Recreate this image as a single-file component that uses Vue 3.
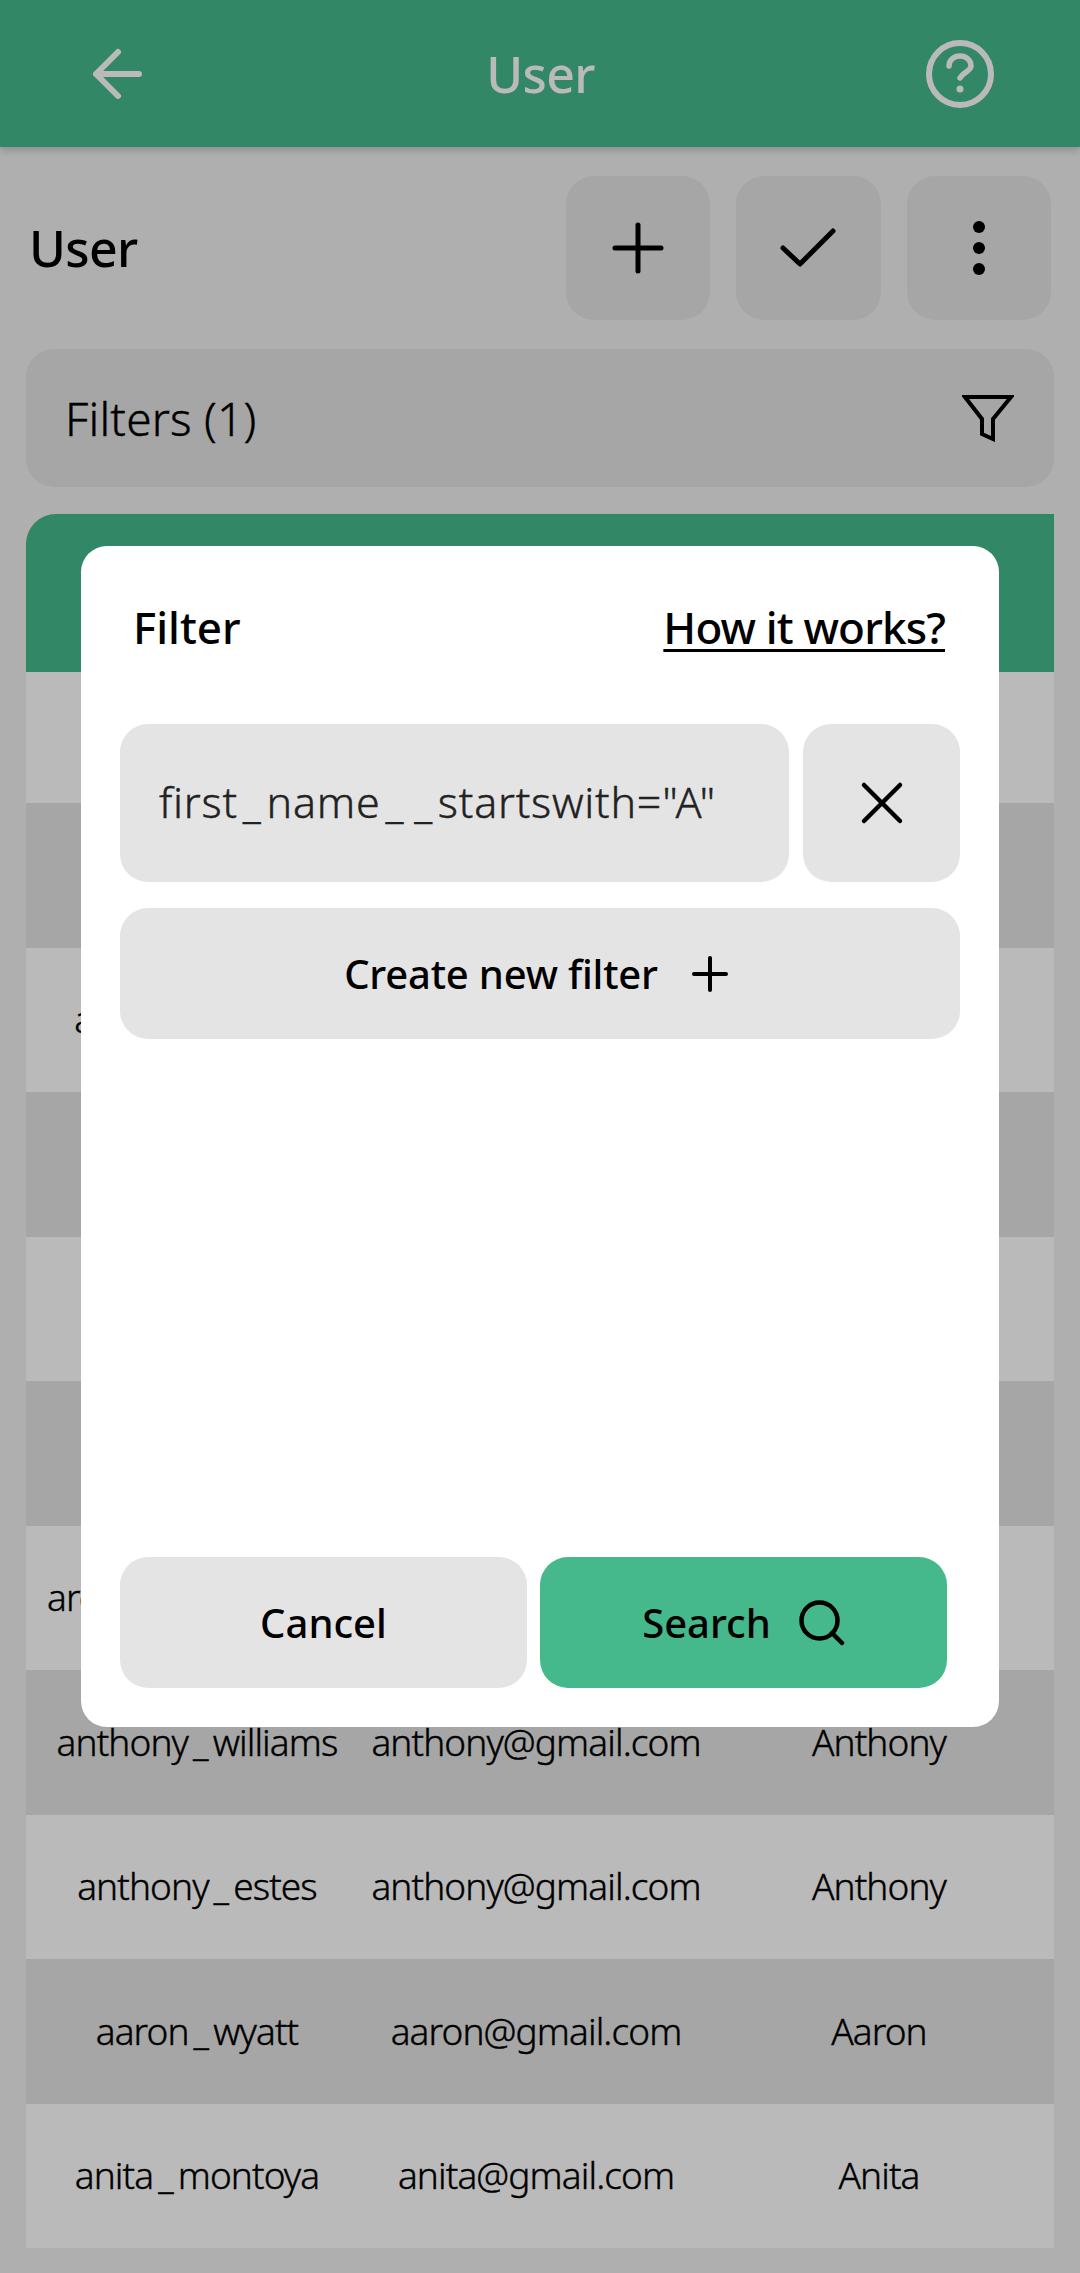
<template>
  <div class="screen">
    <header class="topbar">
      <button class="topbar-icon">
        <svg width="60" height="56" viewBox="0 0 60 56" fill="none" stroke="currentColor" stroke-width="6" stroke-linecap="round" stroke-linejoin="round">
          <path d="M8 28H51M30 6L8 28L30 50" />
        </svg>
      </button>
      <h1 class="topbar-title">User</h1>
      <button class="topbar-icon">
        <svg width="70" height="70" viewBox="0 0 70 70" fill="none" stroke="currentColor" stroke-width="6" stroke-linecap="round">
          <circle cx="35" cy="35" r="31" />
          <path d="M24 27c0-6 5-10 11-10s11 4 11 10c0 5-8 6-11 12" stroke-width="5.5" />
          <circle cx="35" cy="50" r="3.5" fill="currentColor" stroke="none" />
        </svg>
      </button>
    </header>

    <main class="content">
      <div class="title-row">
        <h2 class="page-title">User</h2>
        <div class="actions">
          <button class="action-btn">
            <svg width="52" height="52" viewBox="0 0 52 52" fill="none" stroke="#000" stroke-width="5" stroke-linecap="round">
              <path d="M26 3V49M3 26H49" />
            </svg>
          </button>
          <button class="action-btn">
            <svg width="56" height="40" viewBox="0 0 56 40" fill="none" stroke="#000" stroke-width="5" stroke-linecap="round" stroke-linejoin="round">
              <path d="M3 20L20 36L53 3" />
            </svg>
          </button>
          <button class="action-btn">
            <svg width="12" height="54" viewBox="0 0 12 54" fill="#000">
              <circle cx="6" cy="6" r="6" />
              <circle cx="6" cy="27" r="6" />
              <circle cx="6" cy="48" r="6" />
            </svg>
          </button>
        </div>
      </div>

      <div class="filters-bar">
        <span>Filters (1)</span>
        <svg width="52" height="48" viewBox="0 0 52 48" fill="none" stroke="#000" stroke-width="4" stroke-linejoin="miter">
          <path d="M3 3H49L31 25V45L20 40V25Z" />
        </svg>
      </div>

      <div class="table">
        <div class="table-head">
          <span>Username</span>
          <span>Email</span>
          <span>First name</span>
        </div>
        <div
          v-for="(user, i) in users"
          :key="user.username"
          class="table-row"
          :class="{ first: i === 0, odd: i % 2 === 1 }"
        >
          <span>
            <template v-for="(part, p) in user.username.split('_')" :key="p">
              <span v-if="p > 0" class="underscore">_</span>{{ part }}
            </template>
          </span>
          <span>{{ user.email }}</span>
          <span>{{ user.name }}</span>
        </div>
      </div>
    </main>

    <div class="overlay">
      <div class="modal">
        <div class="modal-head">
          <span class="modal-title">Filter</span>
          <a class="modal-link">How it works?</a>
        </div>

        <div class="filter-row">
          <div class="filter-input">
            <span>first<span class="underscore">_</span>name<span class="underscore">_</span><span class="underscore">_</span>startswith="A"</span>
          </div>
          <button class="filter-remove">
            <svg width="44" height="44" viewBox="0 0 44 44" fill="none" stroke="#000" stroke-width="4.5" stroke-linecap="round">
              <path d="M4 4L40 40M40 4L4 40" />
            </svg>
          </button>
        </div>

        <button class="create-btn">
          <span>Create new filter</span>
          <svg width="36" height="36" viewBox="0 0 36 36" fill="none" stroke="#000" stroke-width="4" stroke-linecap="round">
            <path d="M18 2V34M2 18H34" />
          </svg>
        </button>

        <div class="modal-footer">
          <button class="footer-btn">Cancel</button>
          <button class="footer-btn primary">
            <span>Search</span>
            <svg width="46" height="46" viewBox="0 0 46 46" fill="none" stroke="#000" stroke-width="4.5" stroke-linecap="round">
              <circle cx="20.5" cy="20.5" r="18" />
              <path d="M33 33L43 43" />
            </svg>
          </button>
        </div>
      </div>
    </div>
  </div>
</template>

<script setup>
const users = [
  { username: "adam_cole", email: "adam@gmail.com", name: "Adam" },
  { username: "alice_hunt", email: "alice@gmail.com", name: "Alice" },
  { username: "alexis_harrison", email: "alexis@gmail.com", name: "Alexis" },
  { username: "amy_reed", email: "amy@gmail.com", name: "Amy" },
  { username: "amanda_jules", email: "amanda@gmail.com", name: "Amanda" },
  { username: "andrew_ross", email: "andrew@gmail.com", name: "Andrew" },
  { username: "archibald_richards", email: "archibald@gmail.com", name: "Archibald" },
  { username: "anthony_williams", email: "anthony@gmail.com", name: "Anthony" },
  { username: "anthony_estes", email: "anthony@gmail.com", name: "Anthony" },
  { username: "aaron_wyatt", email: "aaron@gmail.com", name: "Aaron" },
  { username: "anita_montoya", email: "anita@gmail.com", name: "Anita" },
];
</script>

<style>
html,
body {
  margin: 0;
  background: #f0f0f0;
}
</style>

<style scoped>
.screen {
  position: relative;
  height: 2273px;
  overflow: hidden;
  background: #f0f0f0;
  color: #000;
  font-family: "Noto Sans", sans-serif;
}

button {
  border: none;
  padding: 0;
  margin: 0;
  font-family: inherit;
  color: inherit;
  background: none;
}

.topbar {
  height: 147px;
  padding: 0 85px 0 88px;
  box-sizing: border-box;
  display: flex;
  align-items: center;
  justify-content: space-between;
  background: #45b98c;
  color: #fff;
  box-shadow: 0 3px 8px rgba(0, 0, 0, 0.2);
}

.topbar-icon {
  display: flex;
  align-items: center;
}

.topbar-title {
  margin: 0 0 0 8px;
  font-size: 50px;
  font-weight: 500;
  letter-spacing: -0.6px;
}

.content {
  padding: 29px 26px 0;
}

.title-row {
  display: flex;
  align-items: center;
  justify-content: space-between;
  padding-left: 3px;
}

.page-title {
  margin: 0;
  font-size: 50px;
  font-weight: 500;
  letter-spacing: -0.6px;
}

.actions {
  display: flex;
  gap: 26px;
  margin-right: 3px;
}

.action-btn {
  width: 144.5px;
  height: 144px;
  border-radius: 28px;
  background: #e4e4e4;
  display: flex;
  align-items: center;
  justify-content: center;
}

.filters-bar {
  margin-top: 29px;
  height: 138px;
  padding: 0 40px 0 39px;
  border-radius: 28px;
  background: #e4e4e4;
  display: flex;
  align-items: center;
  justify-content: space-between;
  font-size: 46px;
  font-weight: 300;
  letter-spacing: 0.2px;
  -webkit-text-stroke: 0.4px currentColor;
}

.table {
  margin-top: 27px;
}

.table-head,
.table-row {
  display: grid;
  grid-template-columns: 342px 336px 350px;
  align-items: center;
  justify-items: center;
  font-size: 37px;
  font-weight: 300;
  letter-spacing: -0.9px;
  white-space: nowrap;
  -webkit-text-stroke: 0.4px currentColor;
}

.table-head {
  height: 158px;
  border-top-left-radius: 30px;
  background: #45b98c;
  font-weight: 500;
}

.table-row {
  height: 144.5px;
  box-sizing: border-box;
  padding-bottom: 2px;
  background: #fff;
}

.table-row.first {
  height: 131px;
}

.table-row.odd {
  background: #e4e4e4;
}

.underscore {
  margin: 0 5px;
}

.overlay {
  position: absolute;
  inset: 0;
  background: rgba(0, 0, 0, 0.27);
  display: flex;
  align-items: center;
  justify-content: center;
}

.modal {
  width: 918px;
  height: 1181px;
  box-sizing: border-box;
  padding: 0 39px 39px;
  border-radius: 26px;
  background: #fff;
  display: flex;
  flex-direction: column;
}

.modal-head {
  height: 178px;
  box-sizing: border-box;
  padding: 0 15px 16px 13px;
  display: flex;
  align-items: center;
  justify-content: space-between;
  font-size: 44px;
  font-weight: 500;
}

.modal-link {
  letter-spacing: -0.85px;
  text-decoration: underline;
  text-underline-offset: 5px;
  text-decoration-thickness: 3px;
}

.filter-row {
  display: flex;
  gap: 14px;
}

.filter-input {
  flex: 1;
  height: 158px;
  box-sizing: border-box;
  padding: 0 0 4px 39px;
  border-radius: 28px;
  background: #e4e4e4;
  color: #222;
  display: flex;
  align-items: center;
  font-size: 43px;
  font-weight: 300;
  letter-spacing: 0.75px;
  -webkit-text-stroke: 0.4px currentColor;
}

.filter-remove {
  width: 157px;
  height: 158px;
  border-radius: 28px;
  background: #e4e4e4;
  display: flex;
  align-items: center;
  justify-content: center;
}

.create-btn {
  margin-top: 26px;
  height: 131px;
  padding-right: 8px;
  border-radius: 28px;
  background: #e4e4e4;
  display: flex;
  align-items: center;
  justify-content: center;
  gap: 34px;
  font-size: 40px;
  font-weight: 500;
  letter-spacing: -0.2px;
}

.modal-footer {
  margin-top: auto;
  display: flex;
  gap: 13px;
  padding-right: 13px;
}

.footer-btn {
  flex: 1;
  height: 131px;
  border-radius: 28px;
  background: #e4e4e4;
  display: flex;
  align-items: center;
  justify-content: center;
  gap: 28px;
  font-size: 40px;
  font-weight: 500;
}

.footer-btn.primary {
  background: #45b98c;
}
</style>
